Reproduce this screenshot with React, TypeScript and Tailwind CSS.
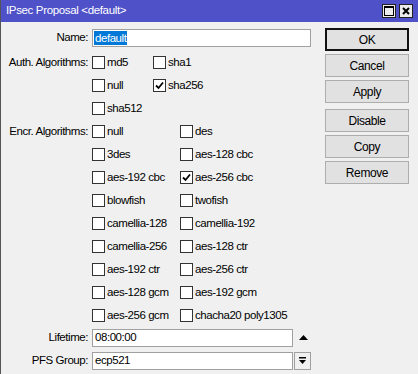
import React from 'react';

const Check = ({ label, checked = false }: { label: string; checked?: boolean }) => (
  <div className="flex items-center h-full">
    <span className="w-[13px] h-[13px] border border-[#333] bg-white flex items-center justify-center shrink-0">
      {checked && (
        <svg width="9" height="9" viewBox="0 0 9 9">
          <path d="M1 4.5 L3.5 7 L8 1.5" stroke="#000" strokeWidth="1.8" fill="none" />
        </svg>
      )}
    </span>
    <span className="ml-[2px] whitespace-nowrap">{label}</span>
  </div>
);

const Label = ({ children }: { children: React.ReactNode }) => (
  <div className="text-right whitespace-nowrap flex items-center justify-end h-full">{children}</div>
);

const Btn = ({ children, primary = false, className = '' }: { children: React.ReactNode; primary?: boolean; className?: string }) => (
  <div
    className={`h-[23px] w-[84px] flex items-center justify-center bg-[#e1e1e1] ${
      primary ? 'border-2 border-[#111]' : 'border border-[#adadad]'
    } ${className}`}
  >
    {children}
  </div>
);

const encr: [string, string, boolean?][] = [
  ['null', 'des'],
  ['3des', 'aes-128 cbc'],
  ['aes-192 cbc', 'aes-256 cbc', true],
  ['blowfish', 'twofish'],
  ['camellia-128', 'camellia-192'],
  ['camellia-256', 'aes-128 ctr'],
  ['aes-192 ctr', 'aes-256 ctr'],
  ['aes-128 gcm', 'aes-192 gcm'],
  ['aes-256 gcm', 'chacha20 poly1305'],
];

export default function App() {
  return (
    <div className="w-[418px] h-[374px] bg-[#f0f0f0] border-l border-[#555] flex flex-col font-['Liberation_Sans',Arial,sans-serif] text-[11.5px] tracking-[-0.45px] text-black overflow-hidden">
      {/* title bar */}
      <div className="h-[22px] bg-[#4f51c9] flex items-center pl-[5px] pr-[5px] text-white text-[11.5px] tracking-[-0.35px] shrink-0">
        <span className="flex-1">IPsec Proposal &lt;default&gt;</span>
        <div className="flex gap-[3px]">
          <div className="w-[14px] h-[14px] bg-[#ececec] border border-[#222] flex items-center justify-center">
            <svg width="10" height="10" viewBox="0 0 10 10">
              <rect x="0.5" y="0.5" width="9" height="9" fill="none" stroke="#000" strokeWidth="1" />
              <rect x="0" y="0" width="10" height="2" fill="#000" />
            </svg>
          </div>
          <div className="w-[14px] h-[14px] bg-[#ececec] border border-[#222] flex items-center justify-center">
            <svg width="8" height="8" viewBox="0 0 8 8">
              <path d="M1 1 L7 7 M7 1 L1 7" stroke="#000" strokeWidth="2" />
            </svg>
          </div>
        </div>
      </div>

      <div className="flex flex-1">
        {/* form */}
        <div className="w-[324px] pt-[4px]">
          <div className="grid grid-cols-[87px_1fr] gap-x-[4px]">
            <div className="h-[23px]"><Label>Name:</Label></div>
            <div className="h-[23px] flex items-center">
              <div className="w-[219px] h-[18px] bg-white border border-[#a0a0a0] flex items-center pl-[1px]">
                <span className="bg-[#0078d7] text-white px-[1px] leading-[14px]">default</span>
              </div>
            </div>

            <div className="h-[2px] col-span-2" />

            <div className="h-[23px]"><Label>Auth. Algorithms:</Label></div>
            <div className="h-[23px] grid grid-cols-[61px_1fr]">
              <Check label="md5" />
              <Check label="sha1" />
            </div>
            <div className="h-[23px]" />
            <div className="h-[23px] grid grid-cols-[61px_1fr]">
              <Check label="null" />
              <Check label="sha256" checked />
            </div>
            <div className="h-[23px]" />
            <div className="h-[23px]">
              <Check label="sha512" />
            </div>

            {encr.map(([a, b, c], i) => (
              <React.Fragment key={a}>
                <div className="h-[23px]">{i === 0 && <Label>Encr. Algorithms:</Label>}</div>
                <div className="h-[23px] grid grid-cols-[88px_1fr]">
                  <Check label={a} />
                  <Check label={b} checked={!!c} />
                </div>
              </React.Fragment>
            ))}

            <div className="h-[22px]"><Label>Lifetime:</Label></div>
            <div className="h-[22px] flex items-center">
              <div className="w-[201px] h-[18px] bg-white border border-[#a0a0a0] flex items-center pl-[2px]">08:00:00</div>
              <svg className="ml-[6px]" width="9" height="6" viewBox="0 0 9 6">
                <path d="M4.5 0 L9 5 L0 5 Z" fill="#000" />
              </svg>
            </div>

            <div className="h-[23px]"><Label>PFS Group:</Label></div>
            <div className="h-[23px] flex items-center">
              <div className="w-[201px] h-[18px] bg-white border border-[#a0a0a0] flex items-center pl-[2px]">ecp521</div>
              <div className="ml-[1px] w-[17px] h-[18px] bg-[#f0f0f0] border border-[#a0a0a0] flex items-center justify-center">
                <svg width="9" height="9" viewBox="0 0 9 9">
                  <rect x="1" y="1" width="7" height="1.5" fill="#000" />
                  <path d="M1 4 L8 4 L4.5 8 Z" fill="#000" />
                </svg>
              </div>
            </div>
          </div>
        </div>

        {/* buttons */}
        <div className="flex flex-col pt-[6px] gap-[3px] text-[12px] tracking-[-0.4px]">
          <Btn primary>OK</Btn>
          <Btn>Cancel</Btn>
          <Btn>Apply</Btn>
          <Btn className="mt-[3px]">Disable</Btn>
          <Btn>Copy</Btn>
          <Btn>Remove</Btn>
        </div>
      </div>
    </div>
  );
}
